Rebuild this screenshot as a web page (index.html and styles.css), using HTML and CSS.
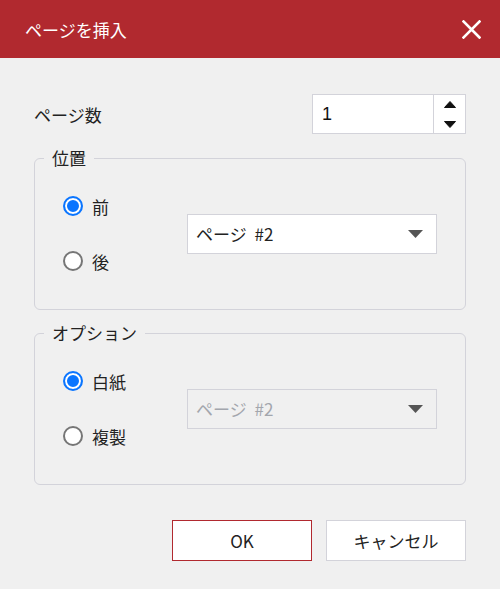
FILE: index.html
```html
<!DOCTYPE html>
<html lang="ja">
<head>
<meta charset="utf-8">
<title>ページを挿入</title>
<link rel="stylesheet" href="styles.css">
</head>
<body>
<div class="dialog">
  <header class="titlebar">
    <span class="title">ページを挿入</span>
    <button class="close" aria-label="閉じる">
      <svg width="19" height="19" viewBox="0 0 19 19"><path d="M1.5 1.5L17.5 17.5M17.5 1.5L1.5 17.5" stroke="#fff" stroke-width="2.6" stroke-linecap="square"/></svg>
    </button>
  </header>
  <main class="content">
    <div class="count-row">
      <span class="label">ページ数</span>
      <div class="spinner">
        <span class="spin-value">1</span>
        <div class="spin-buttons">
          <svg width="12" height="7" viewBox="0 0 12 7"><path d="M6 0.5L11.5 6.5H0.5Z" fill="#111" stroke="#111" stroke-linejoin="round"/></svg>
          <svg width="12" height="7" viewBox="0 0 12 7"><path d="M6 6.5L11.5 0.5H0.5Z" fill="#111" stroke="#111" stroke-linejoin="round"/></svg>
        </div>
      </div>
    </div>

    <fieldset class="group">
      <legend>位置</legend>
      <div class="group-body">
        <div class="radios">
          <label class="radio"><input type="radio" name="pos" checked><span>前</span></label>
          <label class="radio"><input type="radio" name="pos"><span>後</span></label>
        </div>
        <div class="select">
          <span>ページ #2</span>
          <svg width="15" height="8" viewBox="0 0 15 8"><path d="M0 0H15L7.5 8Z" fill="#555"/></svg>
        </div>
      </div>
    </fieldset>

    <fieldset class="group">
      <legend>オプション</legend>
      <div class="group-body">
        <div class="radios">
          <label class="radio"><input type="radio" name="opt" checked><span>白紙</span></label>
          <label class="radio"><input type="radio" name="opt"><span>複製</span></label>
        </div>
        <div class="select disabled">
          <span>ページ #2</span>
          <svg width="15" height="8" viewBox="0 0 15 8"><path d="M0 0H15L7.5 8Z" fill="#555"/></svg>
        </div>
      </div>
    </fieldset>

    <div class="actions">
      <button class="btn btn-ok">OK</button>
      <button class="btn">キャンセル</button>
    </div>
  </main>
</div>
</body>
</html>
```
FILE: styles.css
```css
* { box-sizing: border-box; }
html, body {
  margin: 0;
  padding: 0;
  background: #f0f0f0;
}
body {
  font-family: "Noto Sans CJK JP", "Noto Sans", sans-serif;
  font-size: 17px;
  color: #222;
  width: 500px;
  height: 589px;
  overflow: hidden;
}
.titlebar {
  height: 58px;
  background: #b1292f;
  display: flex;
  align-items: center;
  justify-content: space-between;
  padding: 0 19px 0 25px;
}
.title {
  color: #fff;
  font-size: 17px;
}
.close {
  background: none;
  border: 0;
  padding: 0;
  width: 19px;
  height: 19px;
  display: flex;
  margin-top: 1px;
}
.content {
  padding: 36px 34px 0 34px;
}
.count-row {
  display: flex;
  justify-content: space-between;
  align-items: center;
  height: 40px;
}
.label { font-size: 17px; }
.spinner {
  width: 154px;
  height: 40px;
  background: #fff;
  border: 1px solid #d3d3da;
  display: flex;
}
.spin-value {
  flex: 1;
  padding-left: 9px;
  display: flex;
  align-items: center;
  font-family: "Liberation Sans", sans-serif;
  font-size: 18px;
  color: #111;
}
.spin-buttons {
  width: 32px;
  border-left: 1px solid #d3d3da;
  display: flex;
  flex-direction: column;
  align-items: center;
  justify-content: space-between;
  padding: 6px 0 5px;
}
.group {
  margin: 12px 0 0 0;
  border: 1px solid #d3d3da;
  border-radius: 6px;
  padding: 20px 28px 32px 28px;
  height: 164px;
}
.group + .group { margin-top: 11px; }
.group legend {
  padding: 0 8px;
  margin-left: -19px;
  font-size: 17px;
  line-height: 24px;
}
.group-body {
  display: flex;
  justify-content: space-between;
  align-items: center;
  height: 100%;
}
.radios {
  display: flex;
  flex-direction: column;
  gap: 25px;
}
.radio {
  display: flex;
  align-items: center;
  gap: 9px;
  height: 30px;
  font-size: 17px;
}
.radio input {
  appearance: none;
  -webkit-appearance: none;
  margin: 0;
  width: 20px;
  height: 20px;
  border-radius: 50%;
  border: 2px solid #767676;
  background: #fff;
}
.radio input:checked {
  border: 2px solid #0a75ff;
  box-shadow: inset 0 0 0 2px #fff, inset 0 0 0 8px #0a75ff;
}
.select {
  width: 250px;
  height: 40px;
  background: #fff;
  border: 1px solid #d3d3da;
  display: flex;
  align-items: center;
  justify-content: space-between;
  padding: 0 13px 0 8px;
  font-size: 17px;
  word-spacing: 4px;
}
.select.disabled {
  background: #f0f0f0;
  color: #a3a6ad;
}
.actions {
  display: flex;
  justify-content: flex-end;
  gap: 14px;
  margin-top: 35px;
}
.btn {
  width: 140px;
  height: 41px;
  background: #fff;
  border: 1px solid #d3d3da;
  font-family: "Noto Sans CJK JP", "Noto Sans", sans-serif;
  font-size: 17px;
  color: #222;
  padding: 0;
}
.btn-ok { border-color: #b1292f; }
```
